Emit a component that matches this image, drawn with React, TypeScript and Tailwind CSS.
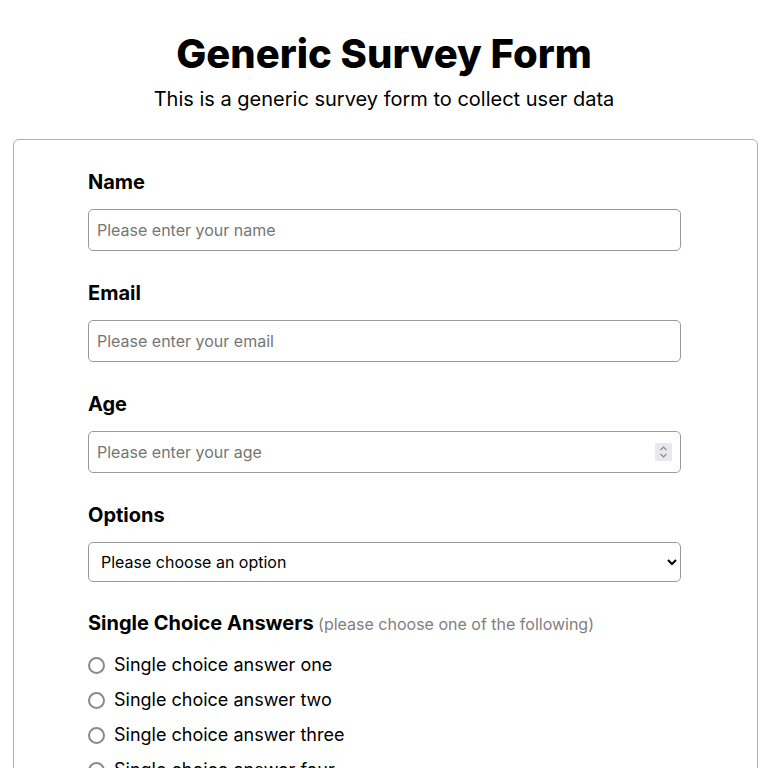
import { useState } from "react";

const answers = ["one", "two", "three", "four"];

const Field = ({ label, placeholder }: { label: string; placeholder: string }) => (
  <div className="flex flex-col">
    <label className="mb-[13px] text-[20px] font-bold leading-7">{label}</label>
    <input
      type="text"
      placeholder={placeholder}
      className="h-[42px] rounded-[5px] border border-[#9a9a9a] px-2 text-base placeholder:text-[#767676]"
    />
  </div>
);

const App = () => {
  const [choice, setChoice] = useState("");

  return (
    <div className="min-h-screen bg-white text-black" style={{ fontFamily: "Inter, 'Noto Sans', sans-serif" }}>
      <h1 className="pt-[27px] text-center text-[40px] font-extrabold leading-[54px]">
        Generic Survey Form
      </h1>
      <p className="mt-[4px] text-center text-[20px] leading-7">
        This is a generic survey form to collect user data
      </p>
      <div className="ml-[13px] mr-[10px] mt-[26px] rounded-[6px] border border-[#b0b0b0] pb-10 pt-7">
        <form className="ml-[74px] flex w-[593px] flex-col gap-7">
          <Field label="Name" placeholder="Please enter your name" />
          <Field label="Email" placeholder="Please enter your email" />
          <div className="flex flex-col">
            <label className="mb-[13px] text-[20px] font-bold leading-7">Age</label>
            <div className="relative">
              <input
                type="text"
                placeholder="Please enter your age"
                className="h-[42px] w-full rounded-[5px] border border-[#9a9a9a] px-2 text-base placeholder:text-[#767676]"
              />
              <span className="absolute right-[9px] top-[12px] flex h-[18px] w-[17px] items-center justify-center bg-[#e9e9ed]">
                <svg width="9" height="14" viewBox="0 0 9 14" fill="none" stroke="#8a8a8a" strokeWidth="1.2">
                  <path d="M1.5 5 L4.5 2 L7.5 5" />
                  <path d="M1.5 9 L4.5 12 L7.5 9" />
                </svg>
              </span>
            </div>
          </div>
          <div className="flex flex-col">
            <label className="mb-[13px] text-[20px] font-bold leading-7">Options</label>
            <select className="h-10 rounded-[5px] border border-[#9a9a9a] px-2 text-base" defaultValue="">
              <option value="">Please choose an option</option>
              <option value="a">Option A</option>
              <option value="b">Option B</option>
            </select>
          </div>
          <div className="-mt-px flex flex-col">
            <p className="mb-[13px] leading-7">
              <span className="text-[20px] font-bold">Single Choice Answers</span>{" "}
              <span className="text-base text-[#808080]">(please choose one of the following)</span>
            </p>
            <div className="flex flex-col gap-[7px]">
              {answers.map((a) => (
                <label key={a} className="flex items-center gap-[9px] text-lg leading-7">
                  <input
                    type="radio"
                    name="single"
                    checked={choice === a}
                    onChange={() => setChoice(a)}
                    className="h-[17px] w-[17px] appearance-none rounded-full border-2 border-[#8a8a8a] checked:border-[5px] checked:border-black"
                  />
                  Single choice answer {a}
                </label>
              ))}
            </div>
          </div>
        </form>
      </div>
    </div>
  );
};

export default App;
